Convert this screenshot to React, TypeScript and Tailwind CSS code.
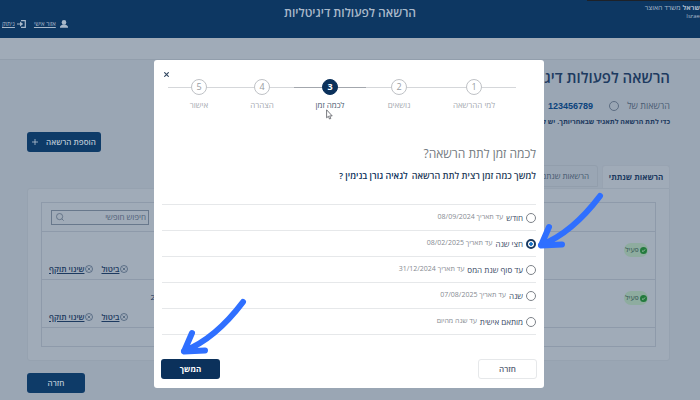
import { useState } from "react";
import clsx from "clsx";

const steps = [
  { id: 1, label: "למי ההרשאה" },
  { id: 2, label: "נושאים" },
  { id: 3, label: "לכמה זמן" },
  { id: 4, label: "הצהרה" },
  { id: 5, label: "אישור" },
];

const durations = [
  { id: "month", label: "חודש", note: "עד תאריך 08/09/2024" },
  { id: "half", label: "חצי שנה", note: "עד תאריך 08/02/2025" },
  { id: "tax", label: "עד סוף שנת המס", note: "עד תאריך 31/12/2024" },
  { id: "year", label: "שנה", note: "עד תאריך 07/08/2025" },
  { id: "custom", label: "מותאם אישית", note: "עד שנה מהיום" },
];

const permissions = [
  { id: 1, date: "" },
  { id: 2, date: "28/08/2024" },
];

function Arrow({ className }: { className: string }) {
  return (
    <svg
      className={clsx("pointer-events-none absolute h-[60px] w-[72px]", className)}
      viewBox="0 0 72 60"
      fill="none"
      stroke="#2f6fff"
      strokeWidth="6"
      strokeLinecap="round"
      strokeLinejoin="round"
    >
      <path d="M65 5Q37 42 6 54M14 36L6 54.500L27 53.500" />
      <path d="M10 46L6 54L16 53z" fill="#2f6fff" stroke="none" />
    </svg>
  );
}

function RowAction({ label }: { label: string }) {
  return (
    <a href="#" className="flex items-center gap-px font-semibold text-[#1d3a60]">
      <svg className="h-2 w-2" viewBox="0 0 8 8" fill="none" stroke="#3e5470" strokeWidth="0.7">
        <circle cx="4" cy="4" r="3.5" />
        <path d="M2.6 2.6l2.8 2.8M5.4 2.6L2.6 5.4" />
      </svg>
      <span className="underline">{label}</span>
    </a>
  );
}

function Header() {
  return (
    <header className="relative flex h-[38px] items-start justify-center bg-[#0d3762] text-[#a9b9ca]">
      <div className="absolute right-0 top-0 h-px w-[113px] bg-[#1d2128]" />
      <div className="pt-1 text-[12px] leading-[18px] font-semibold">הרשאה לפעולות דיגיטליות</div>
      <div className="absolute right-0 top-[3px] text-[7px] leading-[9px] whitespace-nowrap">
        <div>
          <b>שראל</b> משרד האוצר
        </div>
        <div dir="ltr" className="text-right text-[6px]">Israe</div>
      </div>
      <nav className="absolute left-0.5 top-[19px] flex gap-2 text-[6px] leading-[10px]">
        <a href="#" className="flex items-center gap-1">
          <svg className="h-2 w-2" viewBox="0 0 8 8" fill="currentColor">
            <circle cx="4" cy="2.4" r="2.300" />
            <path d="M0 7.800V6.800C0 5.600 1.500 5.200 3 4.400h2c1.500.8 3 1.200 3 2.400v1z" />
          </svg>
          <span className="underline">אזור אישי</span>
        </a>
        <a href="#" className="flex items-center gap-0.5">
          <svg className="h-2 w-[9px]" viewBox="0 0 9 8" fill="none" stroke="currentColor" strokeWidth="1.2">
            <path d="M4 .7h4.300v6.600H4M0 4h4" />
            <path d="M3 1.400L6.200 4L3 6.600z" fill="currentColor" stroke="none" />
          </svg>
          <span className="underline">ניתוק</span>
        </a>
      </nav>
    </header>
  );
}

function Background() {
  return (
    <main className="flex flex-col pl-[27px] pr-[30px] text-[#1d3a60]">
      <h1 className="mt-1 text-[15px] leading-[26px] font-semibold">הרשאה לפעולות דיגיטליות</h1>
      <div className="mt-2 flex h-4 items-center text-[9px]">
        <label htmlFor="owner" className="text-[#4b5c73]">הרשאות של</label>
        <input
          id="owner"
          type="radio"
          className="mx-2 h-[10px] w-[10px] appearance-none rounded-full border border-[#5d6d82]"
        />
        <span className="mr-2 font-['Liberation_Sans',sans-serif] text-[9px] leading-[12px] font-bold text-[#0b437c]">123456789</span>
      </div>
      <p className="mt-0.5 text-[7px] leading-[12px] font-bold">כדי לתת הרשאה לתאגיד שבאחריותך. יש לבחור בתאגיד המבוקש</p>
      <button className="mt-1 flex h-5 w-[74px] items-center justify-center gap-2 self-end rounded-[3px] bg-[#0e3b68] text-[8px] font-semibold text-[#b6c4d2]">
        הוספת הרשאה
        <svg className="h-1.5 w-1.5" viewBox="0 0 6 6" stroke="currentColor" strokeWidth="0.8">
          <path d="M3 0v6M0 3h6" />
        </svg>
      </button>

      <div className="mt-[13px] flex gap-1 text-[8px]">
        <button className="h-[23px] w-[68px] rounded-t-[3px] border border-b-0 border-[#98a3b1] bg-[#a0abb8] font-bold">
          הרשאות שנתתי
        </button>
        <button className="h-[22px] w-[67px] rounded-t-[3px] border border-[#929eac] pr-2 text-right whitespace-nowrap text-[#44566e]">
          הרשאות שנתנו לי
        </button>
      </div>
      <section className="rounded-b-[3px] rounded-tl-[3px] border border-[#96a2b0] bg-[#a0abb8] p-[13px]">
        <div className="flex h-[29px] items-center justify-end border border-b-0 border-[#8e9aaa] px-[9px]">
          <label className="flex h-[15px] w-[98px] items-center border border-[#68788c] px-0.5">
            <input
              aria-label="חיפוש חופשי"
              placeholder="חיפוש חופשי"
              className="w-full min-w-0 bg-transparent p-0 text-[8px] outline-none placeholder:text-[#4f6077]"
            />
            <svg className="ml-0.5 h-2 w-2 shrink-0" viewBox="0 0 8 8" fill="none" stroke="#4f6077" strokeWidth="0.7">
              <circle cx="3.600" cy="3.600" r="3.100" />
              <path d="M5.800 5.800L7.700 7.700" />
            </svg>
          </label>
        </div>
        <table className="w-full border-collapse text-[8px]">
          <tbody>
            {permissions.map((row) => (
              <tr key={row.id} className="h-12 border border-[#8e9aaa]">
                <td className="pt-[11px] pr-[7px] align-top">
                  <span className="flex h-[14px] w-6 items-center justify-center gap-px rounded-full bg-[#8eac9f] text-[7px] text-[#2f5050]">
                    <svg className="h-[7px] w-[7px] shrink-0" viewBox="0 0 7 7">
                      <circle cx="3.500" cy="3.500" r="3.500" fill="#237a3d" />
                      <path d="M2 3.600l1.100 1L5 2.500" fill="none" stroke="#b6cbbd" strokeWidth="0.8" />
                    </svg>
                    פעיל
                  </span>
                </td>
                <td className="pt-[11px] text-left align-top">{row.date}</td>
                <td className="w-[109px] pb-1 align-bottom">
                  <div className="flex justify-end gap-2 pl-[7px]">
                    <RowAction label="ביטול" />
                    <RowAction label="שינוי תוקף" />
                  </div>
                </td>
              </tr>
            ))}
          </tbody>
        </table>
        <div className="h-[19px] border border-t-0 border-[#8e9aaa]" />
      </section>
      <button className="mt-3 h-5 w-[58px] self-end rounded-[3px] bg-[#0e3b68] text-[8px] font-semibold text-[#b6c4d2]">
        חזרה
      </button>
    </main>
  );
}

function Stepper() {
  return (
    <ol className="mx-3 grid grid-cols-[84fr_66fr_72fr_64fr_62fr] pl-0.5 pr-4">
      {steps.map((step) => {
        const active = step.id === 3;
        return (
          <li key={step.id} className="relative flex flex-col items-center">
            <div className={clsx("absolute top-2 h-px w-full", active ? "bg-[#a3a7ad]" : "bg-[#d5d7da]")} />
            <span
              className={clsx(
                "relative flex h-4 w-4 items-center justify-center rounded-full border text-[9px]",
                active ? "border-[#0b315b] bg-[#0b315b] font-bold text-white" : "border-[#bfc2c6] bg-white text-[#989ca2]"
              )}
            >
              {step.id}
            </span>
            <span className={clsx("mt-1 text-[8px] leading-[12px]", active ? "text-[#4a5a70]" : "text-[#a5a9af]")}>
              {step.label}
            </span>
            {active && (
              <svg className="absolute left-8 top-[30px] h-[11px] w-[7px]" viewBox="0 0 7 11" fill="white" stroke="#55585e" strokeWidth="0.8">
                <path d="M.6.8v8l1.800-1.500 1.100 2.700 1.300-.5-1.100-2.600h2.500z" />
              </svg>
            )}
          </li>
        );
      })}
    </ol>
  );
}

function DurationDialog() {
  const [selected, setSelected] = useState("half");

  return (
    <div role="dialog" className="relative w-[390px] max-w-full rounded-[3px] bg-white pb-[9px]">
      <div className="flex h-[19px] items-end justify-end pl-[9px]">
        <button aria-label="סגירה" className="flex h-[9px] w-[6px] items-center">
          <svg className="h-[5px] w-[5px]" viewBox="0 0 5 5" stroke="#30455f" strokeWidth="1.1">
            <path d="M.3.3l4.400 4.400M4.700.3L.3 4.700" />
          </svg>
        </button>
      </div>
      <Stepper />

      <div className="px-2">
        <h2 className="mt-[33px] text-[12px] leading-[20px] text-[#737980]">לכמה זמן לתת הרשאה?</h2>
        <p className="mt-1 flex gap-1 text-[9px] leading-[16px] font-semibold text-[#263b58]">
          <span>למשך כמה זמן רצית לתת הרשאה</span>
          <span className="text-[#0b315b]">לגאיה גורן בנימין ?</span>
        </p>
        <div className="mt-5 border-t border-[#e6e8ea]">
          {durations.map((item) => (
            <label key={item.id} className="flex h-[26px] items-center border-b border-[#e6e8ea]">
              <input
                type="radio"
                name="duration"
                checked={selected === item.id}
                onChange={() => setSelected(item.id)}
                className="h-[10px] w-[10px] appearance-none rounded-full border border-[#7d8289] checked:border-2 checked:border-[#1b3a60] checked:bg-[radial-gradient(circle,#1673c8_1.5px,white_2px)]"
              />
              <span className="mr-[3px] text-[8px] text-[#36475f]">{item.label}</span>
              <span className="mr-[3px] text-[7px] text-[#858a91]">{item.note}</span>
            </label>
          ))}
        </div>
      </div>

      <div className="mt-6 flex justify-between px-[7px] text-[8px] font-semibold">
        <button className="h-5 w-[59px] rounded-[3px] border border-[#e6e8ea] text-[#566273]">חזרה</button>
        <button className="h-5 w-[59px] rounded-[3px] bg-[#0b315b] font-bold text-white">המשך</button>
      </div>

      <Arrow className="left-6 top-[237px]" />
      <Arrow className="left-[381px] top-[131px]" />
    </div>
  );
}

export default function App() {
  return (
    <div dir="rtl" className="relative min-h-screen overflow-hidden bg-[#9aa6b4] font-['Open_Sans','Noto_Sans',sans-serif]">
      <Header />
      <div className="h-[22px] border-b border-[#929eac] bg-[#a0abb8]" />
      <Background />
      <div className="absolute inset-0 flex items-start justify-center pr-0.5 pt-[60px]">
        <DurationDialog />
      </div>
    </div>
  );
}
